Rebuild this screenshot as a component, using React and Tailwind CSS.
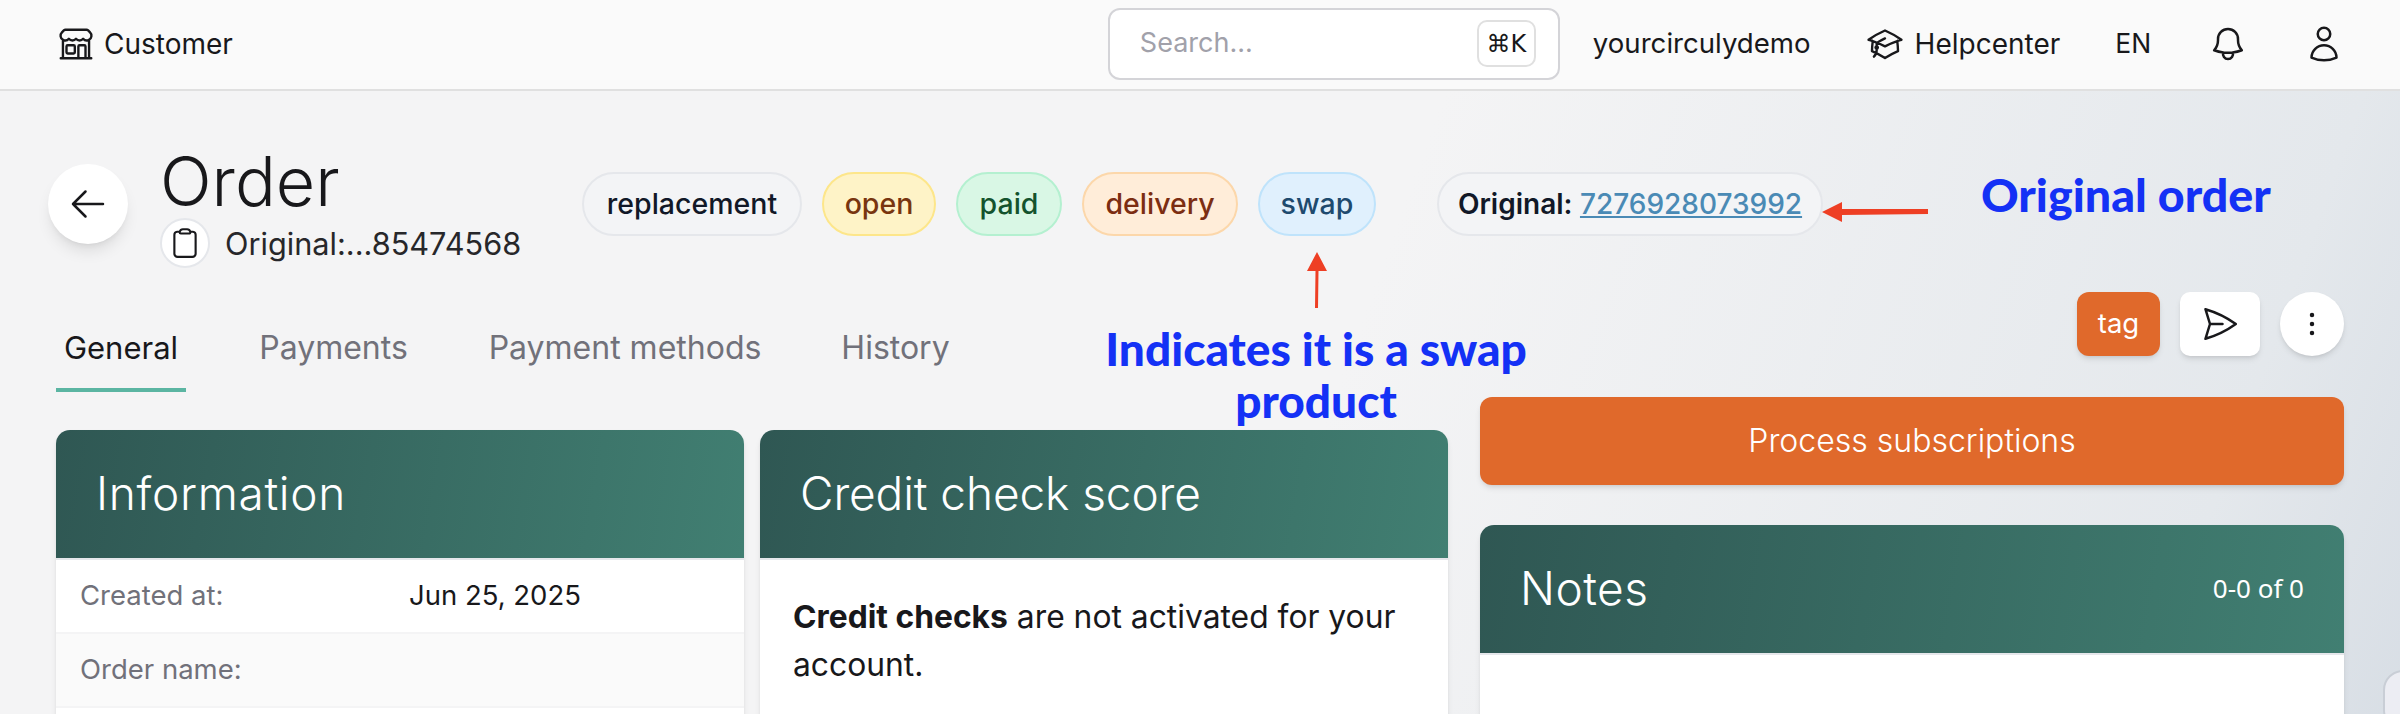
import React from 'react';
import {
  HiOutlineBuildingStorefront,
  HiOutlineAcademicCap,
  HiOutlineBell,
  HiOutlineUser,
  HiOutlineArrowLeft,
  HiOutlineClipboard,
  HiOutlinePaperAirplane,
  HiOutlineEllipsisVertical,
} from 'react-icons/hi2';

const chips = [
  { label: 'replacement', cls: 'w-[220px] bg-[#f3f4f6] border-[#e5e7eb] text-[#111827]' },
  { label: 'open', cls: 'w-[114px] bg-[#fef3c7] border-[#fde68a] text-[#78350f]' },
  { label: 'paid', cls: 'w-[106px] bg-[#d9f7e5] border-[#b4f0d0] text-[#14532d]' },
  { label: 'delivery', cls: 'w-[156px] bg-[#ffedd9] border-[#fcd7aa] text-[#7c2d12]' },
  { label: 'swap', cls: 'w-[118px] bg-[#e0f0fd] border-[#bfe3fb] text-[#1e4a6e]' },
];

const tabs = [
  { label: 'General', cls: 'w-[130px] text-[31px] border-b-4 border-[#5bb5a2]' },
  { label: 'Payments', cls: 'w-[165px] text-[32px] text-[#71717a]' },
  { label: 'Payment methods', cls: 'w-[288px] text-[32px] text-[#71717a]' },
  { label: 'History', cls: 'w-[123px] text-[32px] text-[#71717a]' },
];

const CardHeader = ({ title, right, titleCls }) => (
  <div className="h-[130px] rounded-t-[14px] bg-[linear-gradient(100deg,#2f5753,#417f72)] border-b-2 border-[#e5e7eb] flex items-center justify-between pl-[40px] pr-[40px] pb-[2px]">
    <h2 className={`text-[46px] font-light text-white leading-none ${titleCls}`}>{title}</h2>
    {right && <span className="text-[26px] text-white font-['Noto_Sans',sans-serif]">{right}</span>}
  </div>
);

export default function App() {
  return (
    <div className="relative h-[714px] w-[2400px] overflow-hidden font-['Inter',sans-serif] text-[#18181b]">
      {/* Top bar */}
      <header className="h-[91px] bg-[#fafafa] border-b-2 border-[#e0e0e0] flex items-center pl-[57px] pb-[2px]">
        <HiOutlineBuildingStorefront className="w-[38px] h-[38px] text-[#18181b]" />
        <span className="ml-[9px] text-[28px] font-normal">Customer</span>

        <div className="ml-[875px] w-[452px] h-[72px] bg-white rounded-[12px] border-2 border-[#d4d4d8] flex items-center justify-between pl-[30px] pr-[22px]">
          <span className="text-[27px] text-[#a1a1aa]">Search...</span>
          <kbd className="w-[59px] h-[47px] rounded-[10px] border-2 border-[#e0e0e0] flex items-center justify-center text-[24px] font-['DejaVu_Sans',sans-serif]">⌘K</kbd>
        </div>

        <span className="ml-[33px] text-[27.6px]">yourcirculydemo</span>
        <HiOutlineAcademicCap className="ml-[55px] w-[38px] h-[38px]" />
        <span className="ml-[11px] text-[28px]">Helpcenter</span>
        <span className="ml-[55px] text-[26.5px]">EN</span>
        <HiOutlineBell className="ml-[57px] w-[40px] h-[40px]" />
        <HiOutlineUser className="ml-[56px] w-[40px] h-[40px]" />
      </header>

      {/* Page */}
      <main className="h-[623px] bg-[linear-gradient(110deg,#f4f4f5_0%,#f4f4f5_55%,#e4e8ec_90%,#d8dee5_100%)] px-[56px] pt-[73px]">
        <div className="h-[128px] flex items-start">
          <button className="-ml-[8px] w-[80px] h-[80px] rounded-full bg-white shadow-lg flex items-center justify-center">
            <HiOutlineArrowLeft className="w-[40px] h-[40px] text-[#18181b]" />
          </button>

          <div className="ml-[32px] w-[422px] -mt-[23px]">
            <h1 className="text-[68px] font-light leading-[80px]">Order</h1>
            <div className="-mt-[3px] flex items-center">
              <button className="w-[50px] h-[50px] rounded-full bg-white border-2 border-[#e5e7eb] flex items-center justify-center">
                <HiOutlineClipboard className="w-[34px] h-[34px]" />
              </button>
              <span className="ml-[15px] mt-[2px] text-[30.7px] font-normal text-[#27272a]">Original:...85474568</span>
            </div>
          </div>

          <div className="mt-[8px] flex gap-[20px]">
            {chips.map(c => (
              <span
                key={c.label}
                className={`h-[64px] rounded-full border-2 flex items-center justify-center text-[28.5px] font-medium ${c.cls}`}
              >
                {c.label}
              </span>
            ))}
            <span className="ml-[41px] w-[386px] h-[64px] rounded-full border-2 bg-[#f3f4f6] border-[#e5e7eb] flex items-center justify-center text-[28px] font-medium text-[#111827]">
              <span className="font-semibold">Original:</span>&nbsp;<a className="underline text-[#4a8ab5]">7276928073992</a>
            </span>
          </div>
        </div>

        <div className="flex gap-[32px]">
          {/* Left column */}
          <div className="w-[1392px]">
            <nav className="h-[98px] flex gap-[65px] pt-[36px]">
              {tabs.map(t => (
                <div key={t.label} className={`${t.cls} h-[64px] text-center leading-[40px]`}>
                  {t.label}
                </div>
              ))}
            </nav>

            <div className="mt-[40px] flex gap-[16px]">
              <section className="w-[688px] h-[400px] rounded-[14px] bg-white shadow-md">
                <CardHeader title="Information" titleCls="tracking-[0.7px]" />
                <div className="h-[74px] flex items-center pl-[24px] border-b-2 border-[#f4f4f5]">
                  <span className="w-[329px] text-[27.5px] text-[#71717a]">Created at:</span>
                  <span className="text-[27.5px]">Jun 25, 2025</span>
                </div>
                <div className="h-[74px] flex items-center pl-[24px] bg-[#fafafa] border-b-2 border-[#f4f4f5]">
                  <span className="w-[329px] text-[27.5px] text-[#71717a]">Order name:</span>
                </div>
              </section>

              <section className="w-[688px] h-[400px] rounded-[14px] bg-white shadow-md">
                <CardHeader title="Credit check score" titleCls="tracking-[-0.1px]" />
                <p className="pt-[33px] px-[33px] text-[31.8px] leading-[48px]">
                  <b className="font-bold">Credit checks</b> are not activated for your account.
                </p>
              </section>
            </div>
          </div>

          {/* Right column */}
          <div className="w-[864px]">
            <div className="h-[105px] flex justify-end gap-[20px]">
              <button className="w-[83px] h-[64px] rounded-[12px] bg-[#e0692b] text-white text-[27.5px] shadow-md">tag</button>
              <button className="w-[80px] h-[64px] rounded-[10px] bg-white shadow-md flex items-center justify-center">
                <HiOutlinePaperAirplane className="w-[40px] h-[40px]" />
              </button>
              <button className="w-[64px] h-[64px] rounded-full bg-white shadow-md flex items-center justify-center">
                <HiOutlineEllipsisVertical className="w-[36px] h-[36px]" />
              </button>
            </div>
            <button className="w-full h-[88px] rounded-[12px] bg-[#e0692b] text-white text-[32px] font-light shadow-md">
              Process subscriptions
            </button>
            <section className="mt-[40px] h-[300px] rounded-[14px] bg-white shadow-md">
              <CardHeader title="Notes" right="0-0 of 0" titleCls="tracking-[0.5px]" />
            </section>
          </div>
        </div>
      </main>

      {/* Annotations drawn on top of the screenshot */}
      <span className="absolute left-[1981px] top-[169px] text-[46.5px] leading-[50px] font-black font-['Lato',sans-serif] text-[#1431f5]">Original order</span>
      <div className="absolute left-[1096px] top-[323px] w-[440px] text-center text-[46px] leading-[52px] font-black font-['Lato',sans-serif] text-[#1431f5]">
        Indicates it is a swap product
      </div>
      <svg className="absolute left-[1302px] top-[250px]" width="30" height="62" viewBox="0 0 30 62">
        <path d="M15 2 L25 21 L16.5 21 L16 58 L13 58 L13.5 21 L5 21 Z" fill="#ee3f24" />
      </svg>
      <svg className="absolute left-[1820px] top-[196px]" width="110" height="30" viewBox="0 0 110 30">
        <path d="M2 16 L22 6 L22 13 L108 13 L108 18 L22 19 L22 26 Z" fill="#ee3f24" />
      </svg>

      {/* Chat widget peeking in from the corner */}
      <div className="absolute left-[2383px] top-[670px] w-[60px] h-[60px] rounded-[20px] border-2 border-[#c9ced6] bg-[#ecedf3]" />
    </div>
  );
}
